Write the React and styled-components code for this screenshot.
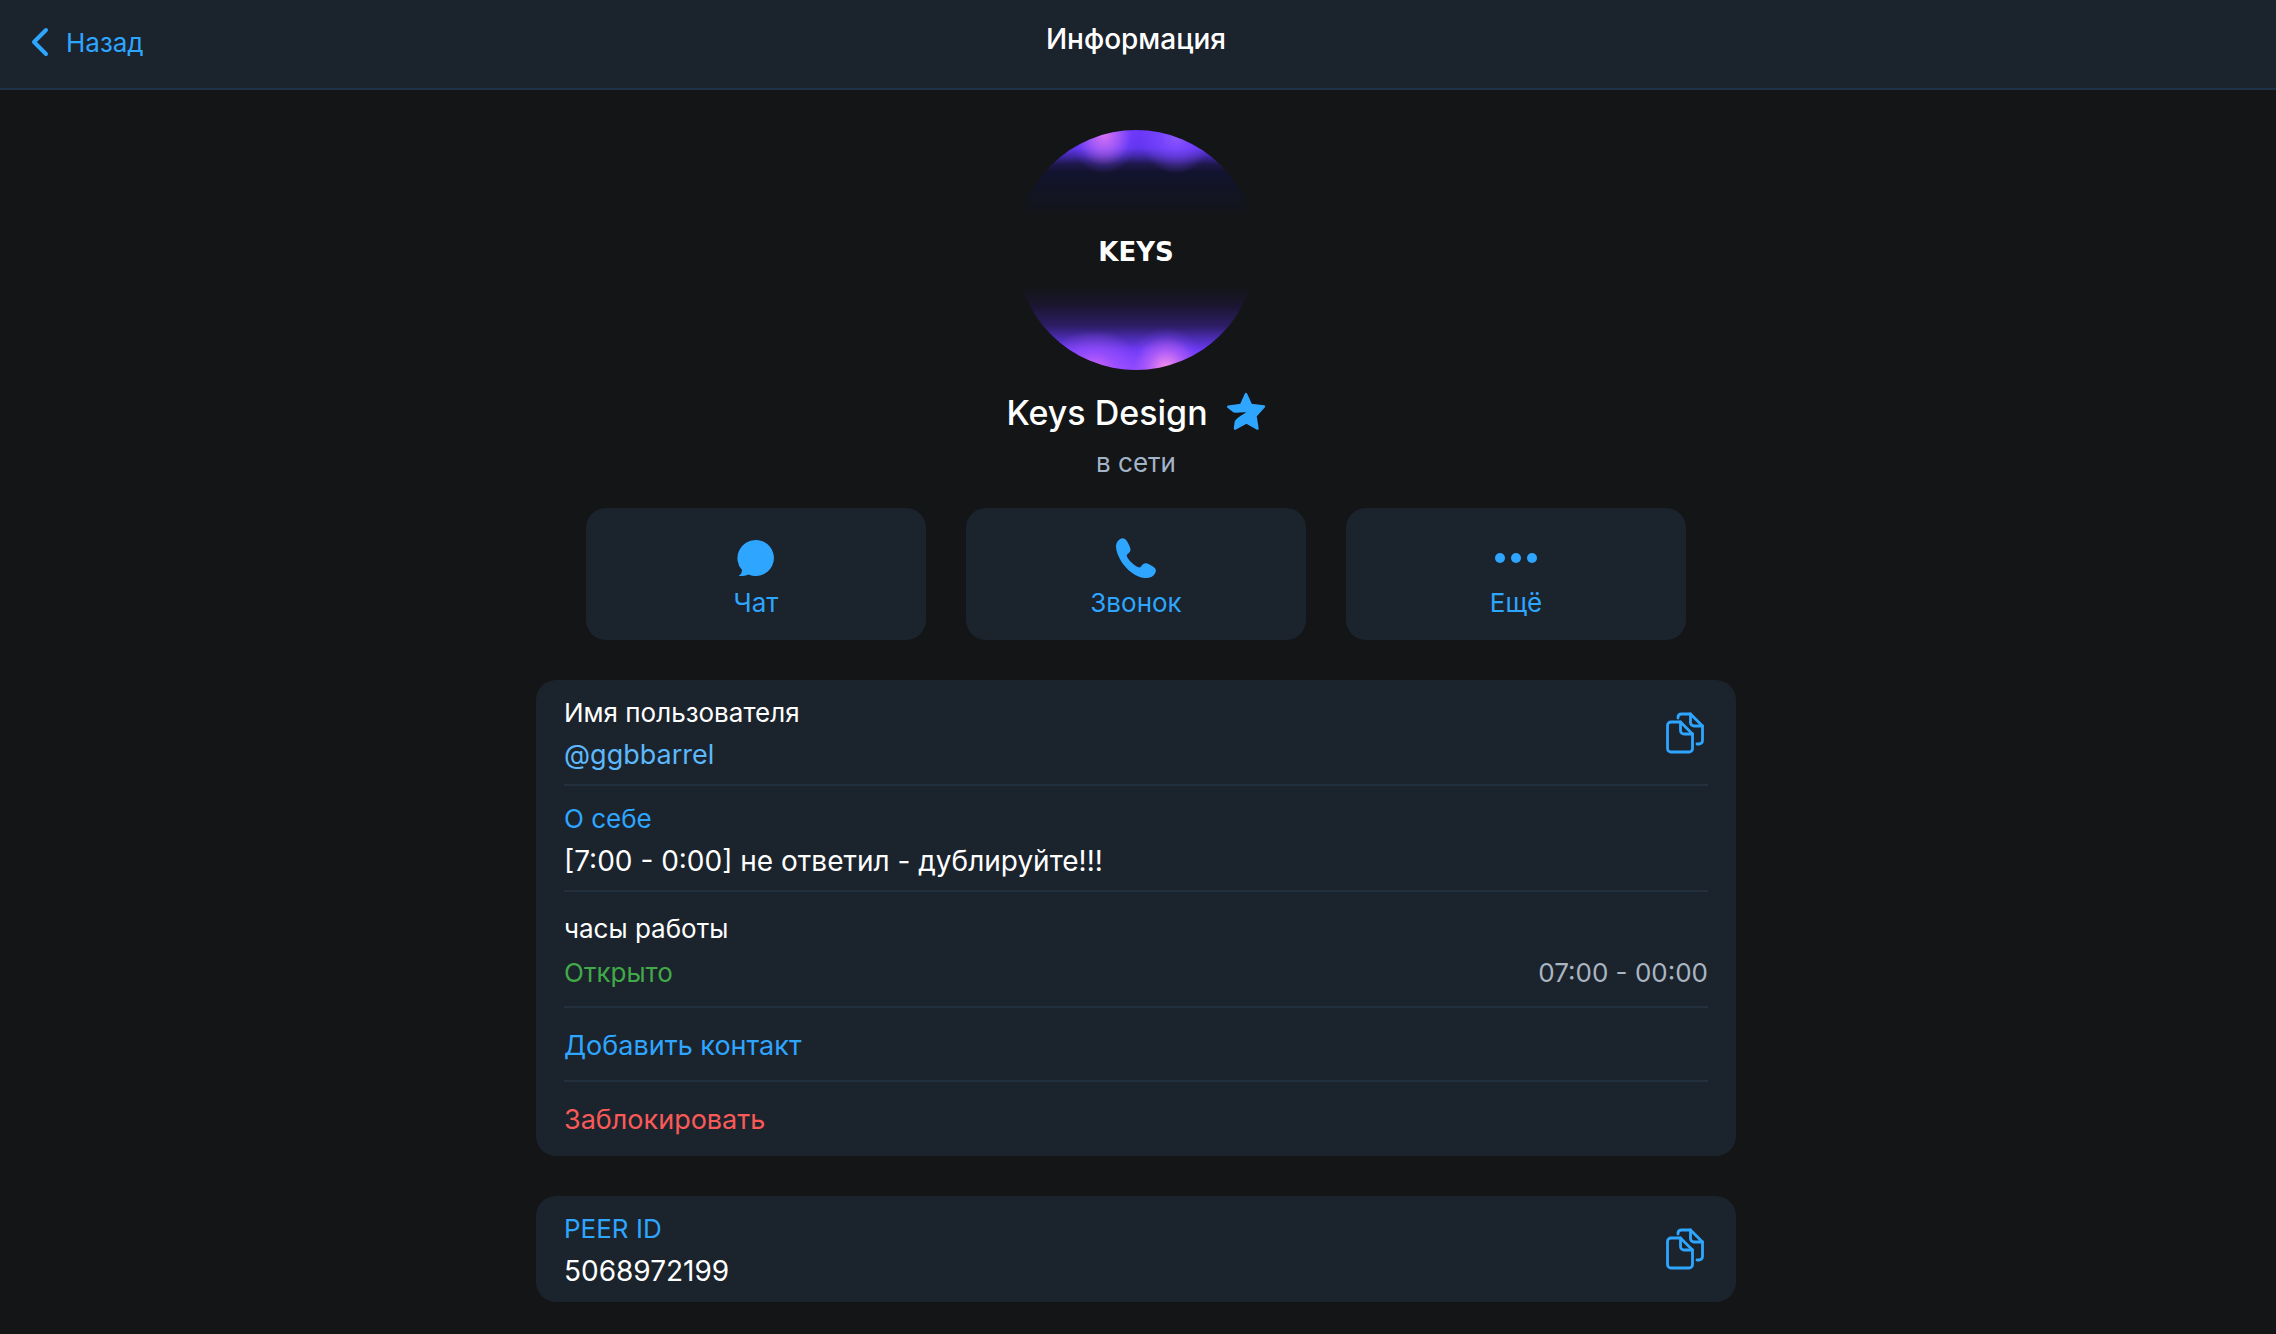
import styled, { createGlobalStyle } from "styled-components";

const GlobalStyle = createGlobalStyle`
  *, *::before, *::after {
    box-sizing: border-box;
  }

  body {
    margin: 0;
    background: #131516;
    color: #fff;
    font-family: Inter, "Noto Sans", sans-serif;
    font-size: 26px;
  }

  button {
    padding: 0;
    border: none;
    background: none;
    color: inherit;
    font: inherit;
    cursor: pointer;
  }

  h1, h2, p {
    margin: 0;
    font-weight: 400;
  }

  svg {
    display: block;
    flex-shrink: 0;
  }
`;

const Header = styled.header`
  display: grid;
  grid-template-columns: 1fr auto 1fr;
  height: 90px;
  padding: 0 32px 0 28px;
  background: #1b232d;
  border-bottom: 2px solid #1d3246;
`;

const BackButton = styled.button`
  display: flex;
  align-items: center;
  gap: 12px;
  justify-self: start;
  height: 84px;
  color: #2ea6ff;
  font-size: 26px;
`;

const Title = styled.h1`
  font-size: 28px;
  font-weight: 500;
  line-height: 78px;
`;

const Main = styled.main`
  display: flex;
  flex-direction: column;
  align-items: center;
  padding: 40px 4px 32px 0;
`;

const Avatar = styled.div`
  display: flex;
  align-items: center;
  justify-content: center;
  width: 240px;
  height: 240px;
  padding-top: 4px;
  border-radius: 50%;
  color: #fff;
  font-family: "DejaVu Sans", sans-serif;
  font-size: 26px;
  font-weight: 700;
  background:
    radial-gradient(34px 40px at 88px 4px, #d872f4 0%, #b866f8aa 45%, #7c48ff33 80%, #7c48ff00 100%),
    radial-gradient(36px 38px at 160px 6px, #8c58ff 0%, #7c48ffaa 45%, #7c48ff00 100%),
    radial-gradient(40px 40px at 150px 238px, #f890ee 0%, #c468f8aa 45%, #8c50ff33 80%, #8c50ff00 100%),
    radial-gradient(50px 40px at 78px 240px, #d064fa 0%, #a858ff99 45%, #8c50ff00 100%),
    linear-gradient(
      180deg,
      #6c38fa 0px,
      #6236f0 18px,
      #4228a8 26px,
      #1e184c 34px,
      #12132e 42px,
      #121424 60px,
      #131516 90px,
      #131516 156px,
      #1b1630 176px,
      #2d1d66 196px,
      #4a2cb0 208px,
      #6c38f4 220px,
      #8a44ff 240px
    );
`;

const NameRow = styled.div`
  display: flex;
  align-items: center;
  gap: 18px;
  margin-top: 20px;
`;

const Name = styled.h2`
  font-size: 34px;
  font-weight: 500;
  line-height: 46px;
`;

const Status = styled.p`
  margin: 8px 0 26px;
  color: #a3b4c8;
  font-size: 26px;
  line-height: 38px;
`;

const Actions = styled.div`
  display: grid;
  grid-template-columns: repeat(3, 1fr);
  gap: 40px;
  width: 100%;
  max-width: 1100px;
`;

const ActionButton = styled.button`
  display: flex;
  flex-direction: column;
  align-items: center;
  gap: 8px;
  && {
    padding: 30px 0 20px;
    background: #1b232d;
  }
  border-radius: 20px;
  color: #2ea6ff;
  font-size: 26px;
  line-height: 34px;
`;

const Card = styled.section`
  width: 100%;
  max-width: 1200px;
  margin-top: 40px;
  padding: 0 28px;
  background: #1b232d;
  border-radius: 20px;
`;

const Row = styled.div`
  display: flex;
  align-items: center;
  justify-content: space-between;
  padding: ${(props) => (props.$tall ? "16px 0 10px" : "12px 0 8px")};
  border-bottom: 2px solid #21303c;

  &:last-child {
    border-color: transparent;
  }
`;

const Field = styled.div`
  flex: 1;
`;

const Label = styled.p`
  color: ${(props) => (props.$accent ? "#2ea6ff" : "#fff")};
  font-size: 26px;
  line-height: 42px;
`;

const Value = styled.p`
  font-size: 28px;
  line-height: 42px;
`;

const UserLink = styled.a`
  display: block;
  color: #5cb8fa;
  font-size: 27px;
  line-height: 42px;
  text-decoration: none;
`;

const Hours = styled.p`
  display: flex;
  justify-content: space-between;
  color: #a9b5c1;
  font-size: 26px;
  line-height: 46px;
`;

const Open = styled.span`
  color: #41aa48;
`;

const RowButton = styled.button`
  flex: 1;
  color: ${(props) => (props.$danger ? "#f95a58" : "#2ea6ff")};
  font-size: 27px;
  line-height: 52px;
  text-align: left;
`;

const CopyButton = styled.button`
  color: #2ea6ff;
`;

function BackIcon() {
  return (
    <svg width="26" height="32" viewBox="0 0 26 32" fill="none" stroke="currentColor" strokeWidth="4" strokeLinecap="round" strokeLinejoin="round">
      <path d="M18 4 6 16l12 12" />
    </svg>
  );
}

function StarIcon() {
  return (
    <svg width="40" height="44" viewBox="3 1 40 44" fill="#2ea6ff" stroke="#2ea6ff" strokeWidth="2.400" strokeLinejoin="round">
      <path d="M23 4 28 15 41 16.500 32.500 26 34.500 38.600 23.500 32.500 12 38.600 12.800 32C14 28.500 19 26.500 27 21.500C20 20.300 15 22 11 21.300L5.200 16.700 18 15Z" />
    </svg>
  );
}

function ChatIcon() {
  return (
    <svg width="40" height="40" viewBox="0 0 40 40" fill="currentColor">
      <path d="M20 2a18 18 0 1 1-7.500 34.400C9.500 37.700 6 38.300 2.500 38c2.500-1.500 3.600-3.700 3.500-6A18 18 0 0 1 20 2Z" />
    </svg>
  );
}

function PhoneIcon() {
  return (
    <svg width="40" height="40" viewBox="0 0 40 40" fill="currentColor">
      <path d="M5.500.4C8.500-.6 10.600 2 12.400 5.800c1.400 3 2.600 5 1.800 7.200-.8 2.400-3.600 2.600-3.400 5 .4 3 9 11.600 12.600 11.400 2.200-.2 2.400-3.600 5.400-4 2.600-.4 5.200 1.400 7.700 2.800 3.500 1.800 4.200 4.300 2.500 7.300-2 3.500-6 4.900-10.500 4.500C20 39.300 10.500 32 5 23 1 16.500-1 9.500.5 5.500 1.300 3 3 1.200 5.500.4Z" />
    </svg>
  );
}

function MoreIcon() {
  return (
    <svg width="44" height="40" viewBox="0 0 44 40" fill="currentColor">
      <circle cx="6" cy="20" r="5" />
      <circle cx="22" cy="20" r="5" />
      <circle cx="38" cy="20" r="5" />
    </svg>
  );
}

function CopyIcon() {
  return (
    <svg width="44" height="44" viewBox="0 2 44 44" fill="none" stroke="currentColor" strokeWidth="2.800" strokeLinecap="round" strokeLinejoin="round">
      <path d="M16.500 12H7a3.500 3.500 0 0 0-3.500 3.500v23A3.500 3.500 0 0 0 7 42h18a3.500 3.500 0 0 0 3.500-3.500V24Z" />
      <path d="M16.500 12V20.500a3.500 3.500 0 0 0 3.500 3.500h8.500" />
      <path d="M14 8V7A3.500 3.500 0 0 1 17.500 4H26.500L38.500 16V30.500A3.500 3.500 0 0 1 35 34H33" />
      <path d="M26.500 4V12.500a3.500 3.500 0 0 0 3.500 3.500h8.500" />
    </svg>
  );
}

function App() {
  return (
    <>
      <GlobalStyle />
      <Header>
        <BackButton>
          <BackIcon />
          Назад
        </BackButton>
        <Title>Информация</Title>
      </Header>

      <Main>
        <Avatar>KEYS</Avatar>
        <NameRow>
          <Name>Keys Design</Name>
          <StarIcon />
        </NameRow>
        <Status>в сети</Status>

        <Actions>
          <ActionButton>
            <ChatIcon />
            Чат
          </ActionButton>
          <ActionButton>
            <PhoneIcon />
            Звонок
          </ActionButton>
          <ActionButton>
            <MoreIcon />
            Ещё
          </ActionButton>
        </Actions>

        <Card>
          <Row>
            <Field>
              <Label>Имя пользователя</Label>
              <UserLink href="#ggbbarrel">@ggbbarrel</UserLink>
            </Field>
            <CopyButton aria-label="Скопировать имя пользователя">
              <CopyIcon />
            </CopyButton>
          </Row>
          <Row>
            <Field>
              <Label $accent>О себе</Label>
              <Value>[7:00 - 0:00] не ответил - дублируйте!!!</Value>
            </Field>
          </Row>
          <Row $tall>
            <Field>
              <Label>часы работы</Label>
              <Hours>
                <Open>Открыто</Open>
                <span>07:00 - 00:00</span>
              </Hours>
            </Field>
          </Row>
          <Row>
            <RowButton>Добавить контакт</RowButton>
          </Row>
          <Row>
            <RowButton $danger>Заблокировать</RowButton>
          </Row>
        </Card>

        <Card>
          <Row>
            <Field>
              <Label $accent>PEER ID</Label>
              <Value>5068972199</Value>
            </Field>
            <CopyButton aria-label="Скопировать PEER ID">
              <CopyIcon />
            </CopyButton>
          </Row>
        </Card>
      </Main>
    </>
  );
}

export default App;
